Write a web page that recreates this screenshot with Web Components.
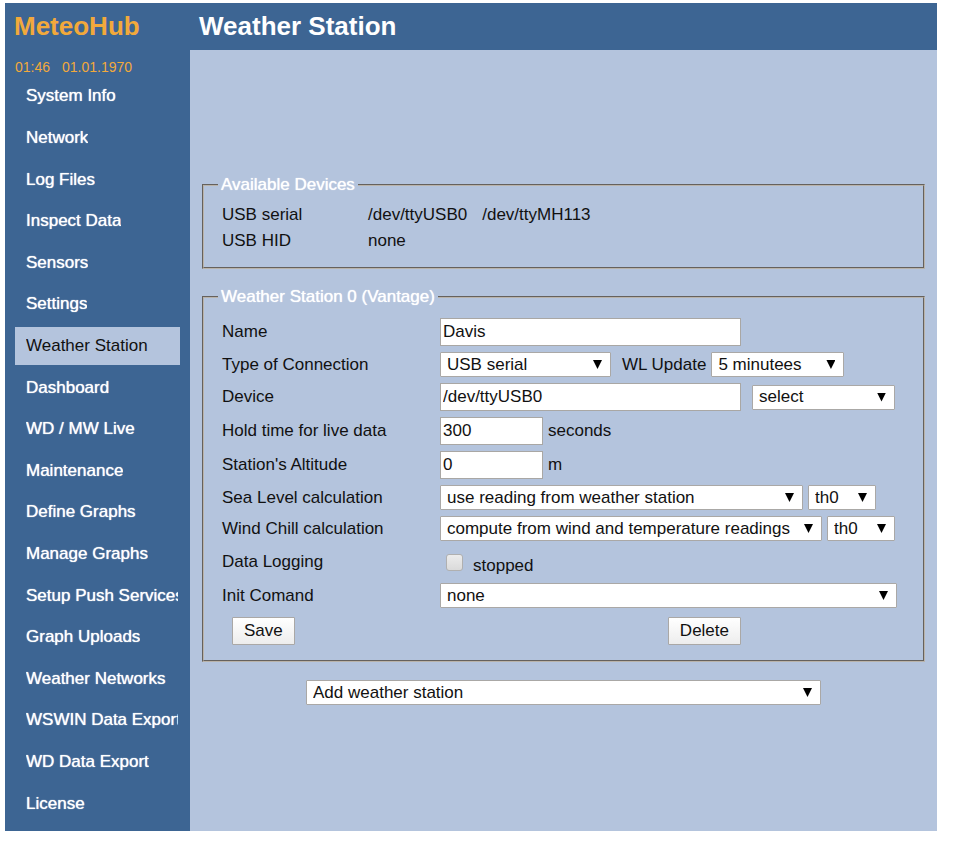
<!DOCTYPE html>
<html lang="en">
<head>
<meta charset="utf-8">
<meta name="viewport" content="width=device-width, initial-scale=1">
<title>MeteoHub - Weather Station</title>
<style>
  body {
    margin: 0;
    background: #fff;
    font-family: "Liberation Sans", Arial, Helvetica, sans-serif;
    font-size: 17px;
    line-height: 20px;
    color: #111;
    --brand-blue: #3d6593;
    --pale-blue: #b4c4dd;
    --orange: #f2a93b;
  }
</style>
</head>
<body>

<hub-page heading="Weather Station" clock="01:46" date="01.01.1970">
  <hub-link slot="nav">System Info</hub-link>
  <hub-link slot="nav">Network</hub-link>
  <hub-link slot="nav">Log Files</hub-link>
  <hub-link slot="nav">Inspect Data</hub-link>
  <hub-link slot="nav">Sensors</hub-link>
  <hub-link slot="nav">Settings</hub-link>
  <hub-link slot="nav" active>Weather Station</hub-link>
  <hub-link slot="nav">Dashboard</hub-link>
  <hub-link slot="nav">WD / MW Live</hub-link>
  <hub-link slot="nav">Maintenance</hub-link>
  <hub-link slot="nav">Define Graphs</hub-link>
  <hub-link slot="nav">Manage Graphs</hub-link>
  <hub-link slot="nav">Setup Push Services</hub-link>
  <hub-link slot="nav">Graph Uploads</hub-link>
  <hub-link slot="nav">Weather Networks</hub-link>
  <hub-link slot="nav">WSWIN Data Export</hub-link>
  <hub-link slot="nav">WD Data Export</hub-link>
  <hub-link slot="nav">License</hub-link>

  <hub-panel heading="Available Devices">
    <device-list></device-list>
  </hub-panel>
  <hub-panel heading="Weather Station 0 (Vantage)">
    <station-form></station-form>
  </hub-panel>
  <add-station></add-station>
</hub-page>

<script>
// Form control styles, shared by every element that draws fields
const controlStyles = `
  input, select, button {
    box-sizing: border-box;
    margin: 0;
    font: inherit;
    color: inherit;
  }
  input[type="text"] {
    width: 301px;
    height: 28px;
    padding: 0 2px;
    border: 1px solid #a9a7a4;
    background: #fff;
  }
  input[type="text"].short {
    width: 103px;
  }
  .drop {
    display: inline-block;
    position: relative;
    height: 25px;
  }
  .drop::after {
    content: "";
    position: absolute;
    right: 9px;
    top: 8px;
    width: 9px;
    height: 9px;
    background: #000;
    clip-path: polygon(0 0, 100% 0, 50% 100%);
    pointer-events: none;
  }
  select {
    display: block;
    appearance: none;
    width: 100%;
    height: 25px;
    padding: 0 0 0 6px;
    border: 1px solid #aaa8a6;
    border-radius: 1px;
    background: #fff;
  }
`;

/**
 * Page frame: header, sidebar with clock and menu, content area.
 */
class HubPage extends HTMLElement {
  constructor() {
    super();
    this.attachShadow({ mode: 'open' }).innerHTML = `
      <style>
        :host {
          display: grid;
          grid-template-columns: 185px 1fr;
          grid-template-rows: 47px 1fr;
          min-height: calc(100vh - 32px);
          margin: 3px 17px 0 5px;
          background: var(--pale-blue);
        }
        .brand, h1 {
          margin: 0;
          background: var(--brand-blue);
          font-size: 26px;
          line-height: 46px;
          font-weight: bold;
        }
        .brand {
          padding-left: 9px;
          color: var(--orange);
        }
        h1 {
          padding-left: 9px;
          color: #fff;
        }
        aside {
          display: flex;
          flex-direction: column;
          padding: 7px 10px 8px;
          background: var(--brand-blue);
        }
        .clock {
          display: flex;
          gap: 12px;
          color: var(--orange);
          font-size: 14px;
        }
        nav {
          flex: 1;
          display: flex;
          flex-direction: column;
          gap: 3px;
        }
        main {
          display: flex;
          flex-direction: column;
          gap: 18px;
          padding: 125px 12px 12px;
          min-width: 0;
        }
      </style>
      <div class="brand">MeteoHub</div>
      <h1></h1>
      <aside>
        <div class="clock"><span class="time"></span><span class="date"></span></div>
        <nav><slot name="nav"></slot></nav>
      </aside>
      <main><slot></slot></main>
    `;
  }

  connectedCallback() {
    this.shadowRoot.querySelector('h1').textContent = this.getAttribute('heading');
    this.shadowRoot.querySelector('.time').textContent = this.getAttribute('clock');
    this.shadowRoot.querySelector('.date').textContent = this.getAttribute('date');
  }
}
customElements.define('hub-page', HubPage);

/**
 * One entry of the sidebar menu. Long names are cut at the edge.
 */
class HubLink extends HTMLElement {
  constructor() {
    super();
    this.attachShadow({ mode: 'open' }).innerHTML = `
      <style>
        :host {
          flex: 1;
          display: flex;
          min-height: 24px;
        }
        a {
          flex: 1;
          display: flex;
          align-items: center;
          min-width: 0;
          padding: 0 2px 0 11px;
          white-space: nowrap;
          color: #fff;
          text-decoration: none;
          text-shadow: 0 0 1px #fff;
        }
        span {
          overflow: hidden;
        }
        :host([active]) a {
          background: var(--pale-blue);
          color: #111;
          text-shadow: none;
        }
      </style>
      <a href="#"><span><slot></slot></span></a>
    `;
  }
}
customElements.define('hub-link', HubLink);

/**
 * Framed group with its heading set into the border.
 */
class HubPanel extends HTMLElement {
  constructor() {
    super();
    this.attachShadow({ mode: 'open' }).innerHTML = `
      <style>
        :host {
          display: block;
        }
        fieldset {
          min-width: 0;
          margin: 0;
          padding: 7px 18px 13px;
          border: 2px groove #b9b3aa;
        }
        legend {
          margin-left: -4px;
          padding: 0 3px;
          color: #fff;
          text-shadow: 0 0 1px #fff;
        }
      </style>
      <fieldset>
        <legend></legend>
        <slot></slot>
      </fieldset>
    `;
  }

  connectedCallback() {
    this.shadowRoot.querySelector('legend').textContent = this.getAttribute('heading');
  }
}
customElements.define('hub-panel', HubPanel);

class DeviceList extends HTMLElement {
  constructor() {
    super();
    this.attachShadow({ mode: 'open' }).innerHTML = `
      <style>
        :host {
          display: block;
        }
        table {
          border-collapse: collapse;
        }
        th, td {
          height: 26px;
          padding: 0;
          text-align: left;
          font-weight: normal;
        }
        th {
          width: 146px;
        }
        span + span {
          margin-left: 15px;
        }
      </style>
      <table>
        <tr><th scope="row">USB serial</th><td><span>/dev/ttyUSB0</span><span>/dev/ttyMH113</span></td></tr>
        <tr><th scope="row">USB HID</th><td>none</td></tr>
      </table>
    `;
  }
}
customElements.define('device-list', DeviceList);

/**
 * A label on the left and any number of controls on the right.
 */
class SettingRow extends HTMLElement {
  constructor() {
    super();
    this.attachShadow({ mode: 'open' }).innerHTML = `
      <style>
        :host {
          display: grid;
          grid-template-columns: 218px 1fr;
          align-items: center;
        }
        .controls {
          display: flex;
          align-items: center;
          gap: 5px;
        }
      </style>
      <slot name="label"></slot>
      <div class="controls"><slot></slot></div>
    `;
  }
}
customElements.define('setting-row', SettingRow);

class StationForm extends HTMLElement {
  constructor() {
    super();
    this.attachShadow({ mode: 'open' }).innerHTML = `
      <style>
        ${controlStyles}
        :host {
          display: block;
        }
        form {
          display: flex;
          flex-direction: column;
          gap: 6px;
          padding: 4px 0 2px;
        }
        .apart {
          margin-left: 6px;
        }
        .logging {
          height: 30px;
        }
        input[type="checkbox"] {
          appearance: none;
          width: 17px;
          height: 17px;
          margin: 0 5px 0 6px;
          border: 1px solid #b0b0b0;
          border-radius: 3px;
          background: linear-gradient(#ececec, #dadada);
        }
        .state {
          padding-top: 8px;
        }
        .actions {
          display: flex;
          justify-content: space-between;
          width: 509px;
          padding: 3px 0 0 10px;
        }
        button {
          height: 28px;
          padding: 0 11px;
          border: 1px solid #aaa8a6;
          border-radius: 1px;
          background: linear-gradient(#fff, #ededed);
        }
      </style>
      <form>
        <setting-row>
          <label slot="label" for="name">Name</label>
          <input type="text" id="name" value="Davis">
        </setting-row>
        <setting-row>
          <label slot="label" for="connection">Type of Connection</label>
          <span class="drop" style="width: 171px"><select id="connection"><option>USB serial</option></select></span>
          <label class="apart" for="update">WL Update</label>
          <span class="drop" style="width: 133px"><select id="update"><option>5 minutees</option></select></span>
        </setting-row>
        <setting-row>
          <label slot="label" for="device">Device</label>
          <input type="text" id="device" value="/dev/ttyUSB0">
          <span class="drop apart" style="width: 143px"><select aria-label="Device list"><option>select</option></select></span>
        </setting-row>
        <setting-row>
          <label slot="label" for="hold">Hold time for live data</label>
          <input type="text" class="short" id="hold" value="300">
          <span>seconds</span>
        </setting-row>
        <setting-row>
          <label slot="label" for="altitude">Station's Altitude</label>
          <input type="text" class="short" id="altitude" value="0">
          <span>m</span>
        </setting-row>
        <setting-row>
          <label slot="label" for="sea">Sea Level calculation</label>
          <span class="drop" style="width: 363px"><select id="sea"><option>use reading from weather station</option></select></span>
          <span class="drop" style="width: 68px"><select aria-label="Sea level sensor"><option>th0</option></select></span>
        </setting-row>
        <setting-row>
          <label slot="label" for="chill">Wind Chill calculation</label>
          <span class="drop" style="width: 382px"><select id="chill"><option>compute from wind and temperature readings</option></select></span>
          <span class="drop" style="width: 68px"><select aria-label="Wind chill sensor"><option>th0</option></select></span>
        </setting-row>
        <setting-row class="logging">
          <label slot="label" for="logging">Data Logging</label>
          <input type="checkbox" id="logging">
          <span class="state">stopped</span>
        </setting-row>
        <setting-row>
          <label slot="label" for="init">Init Comand</label>
          <span class="drop" style="width: 457px"><select id="init"><option>none</option></select></span>
        </setting-row>
        <div class="actions">
          <button type="button">Save</button>
          <button type="button">Delete</button>
        </div>
      </form>
    `;
  }
}
customElements.define('station-form', StationForm);

class AddStation extends HTMLElement {
  constructor() {
    super();
    this.attachShadow({ mode: 'open' }).innerHTML = `
      <style>
        ${controlStyles}
        :host {
          display: flex;
          justify-content: center;
        }
        .drop {
          width: 515px;
        }
      </style>
      <span class="drop"><select aria-label="Add weather station"><option>Add weather station</option></select></span>
    `;
  }
}
customElements.define('add-station', AddStation);
</script>
</body>
</html>
